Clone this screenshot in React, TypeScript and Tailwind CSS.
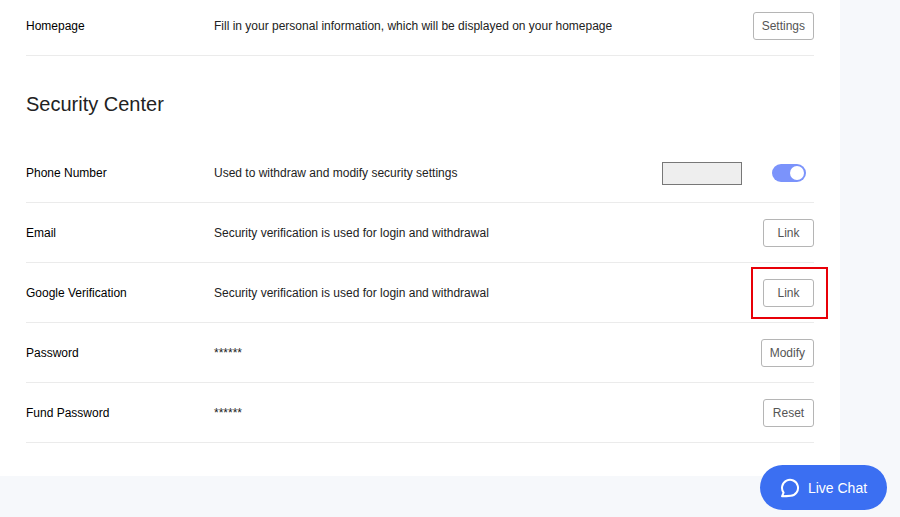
import { ReactNode, useState } from "react";

interface RowProps {
  label: string;
  description: string;
  children: ReactNode;
}

function Row({ label, description, children }: RowProps) {
  return (
    <div className="flex items-center border-b border-[#ebebeb] pt-4 pb-[15px] text-xs text-black">
      <div className="w-47 shrink-0">{label}</div>
      <div className="grow text-[#222]">{description}</div>
      <div className="flex h-7 items-center">{children}</div>
    </div>
  );
}

function ActionButton({ children }: { children: ReactNode }) {
  return (
    <button
      type="button"
      className="h-7 min-w-[51px] rounded-[3px] border border-[#b5b5b5] bg-white px-2 text-xs text-[#555]"
    >
      {children}
    </button>
  );
}

export default function App() {
  const [phoneEnabled, setPhoneEnabled] = useState(true);

  return (
    <div className="min-h-screen bg-[#f6f8fb] font-['Liberation_Sans',Arial,sans-serif]">
      <main className="mr-15 bg-white px-[26px] pb-[33px]">
        <div className="flex items-center border-b border-[#ebebeb] pt-3 pb-[15px] text-xs text-black">
          <div className="w-47 shrink-0">Homepage</div>
          <div className="grow text-[#222]">
            Fill in your personal information, which will be displayed on your homepage
          </div>
          <ActionButton>Settings</ActionButton>
        </div>

        <h2 className="pt-[34px] pb-[25px] text-xl text-[#222]">Security Center</h2>

        <Row label="Phone Number" description="Used to withdraw and modify security settings">
          <input
            type="text"
            aria-label="Phone number"
            readOnly
            className="mr-[30px] h-[23px] w-20 border border-[#777] bg-[#eee]"
          />
          <label className="relative mr-2 flex cursor-pointer">
            <input
              type="checkbox"
              aria-label="Phone verification"
              checked={phoneEnabled}
              onChange={(e) => setPhoneEnabled(e.target.checked)}
              className="peer sr-only"
            />
            <span className="flex h-[18px] w-[34px] items-center rounded-full bg-gray-300 px-0.5 peer-checked:justify-end peer-checked:bg-[#7b93fb]">
              <span className="size-3.5 rounded-full bg-white" />
            </span>
          </label>
        </Row>

        <Row label="Email" description="Security verification is used for login and withdrawal">
          <ActionButton>Link</ActionButton>
        </Row>

        <Row
          label="Google Verification"
          description="Security verification is used for login and withdrawal"
        >
          <div className="relative">
            <ActionButton>Link</ActionButton>
            <div className="pointer-events-none absolute -inset-y-3 -right-3.5 -left-3 border-2 border-[#e80008]" />
          </div>
        </Row>

        <Row label="Password" description="******">
          <ActionButton>Modify</ActionButton>
        </Row>

        <Row label="Fund Password" description="******">
          <ActionButton>Reset</ActionButton>
        </Row>
      </main>

      {/* Floating chat launcher */}
      <button
        type="button"
        className="fixed right-[13px] bottom-[7px] flex h-[45px] w-[127px] items-center justify-center gap-2 rounded-full bg-[#3b6ff2] text-sm text-white"
      >
        <svg
          viewBox="0 0 20 20"
          className="size-5"
          fill="none"
          stroke="currentColor"
          strokeWidth="2"
          strokeLinejoin="round"
        >
          <path d="M2 18.3L3.6 14.6A8 8 0 1 1 10.8 17.8Q6.5 18.3 2 18.3Z" />
        </svg>
        Live Chat
      </button>
    </div>
  );
}
